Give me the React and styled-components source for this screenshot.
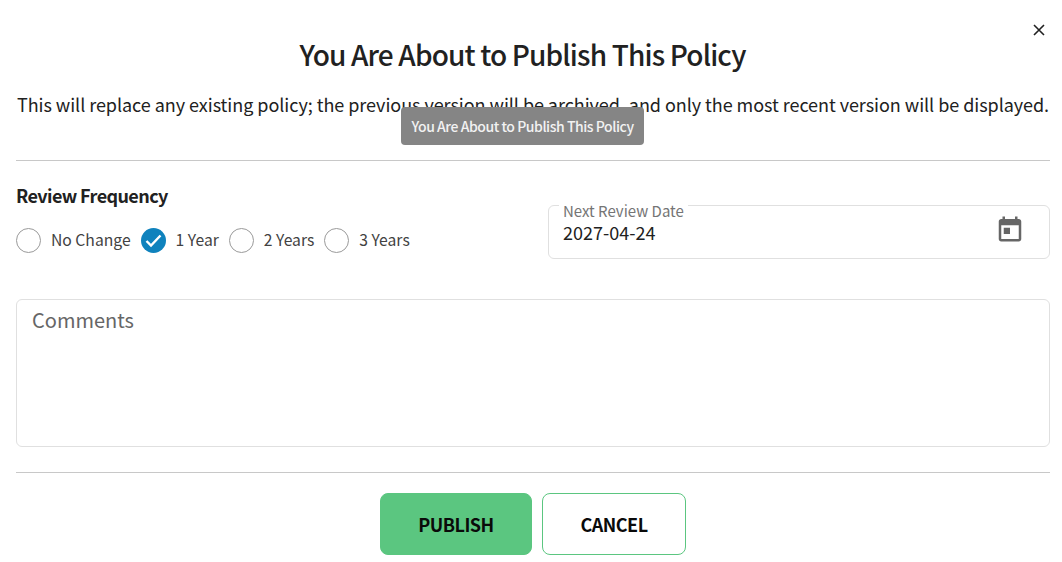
import React from "react";
import styled, { createGlobalStyle } from "styled-components";

const Global = createGlobalStyle`
  html, body { margin: 0; padding: 0; background: #fff; }
  body { font-family: "Noto Sans CJK SC", "Noto Sans", sans-serif; color: #212121; }
`;

const Dialog = styled.div`
  position: relative;
  width: 1062px;
  height: 562px;
  box-sizing: border-box;
  padding: 0 12px 0 16px;
  overflow: hidden;
`;

const CloseButton = styled.button`
  position: absolute;
  top: 22px;
  right: 15px;
  width: 16px;
  height: 16px;
  padding: 0;
  border: 0;
  background: none;
  display: flex;
  align-items: center;
  justify-content: center;
`;

const Title = styled.h2`
  margin: 0;
  padding: 33px 21px 0 0;
  height: 42px;
  line-height: 42px;
  font-size: 28px;
  font-weight: 500;
  letter-spacing: -0.85px;
  text-align: center;
  color: #212121;
`;

const Description = styled.p`
  margin: 14px 0 0;
  line-height: 30px;
  font-size: 18px;
  letter-spacing: -0.05px;
  text-align: center;
  white-space: nowrap;
  color: #212121;
`;

const Tooltip = styled.div`
  position: absolute;
  left: 401px;
  top: 107px;
  width: 243px;
  height: 38px;
  border-radius: 4px;
  background: #858585;
  color: #f2f2f2;
  font-size: 14px;
  font-weight: 500;
  letter-spacing: -0.45px;
  line-height: 38px;
  text-align: center;
  white-space: nowrap;
`;

const Divider = styled.hr`
  margin: ${(p) => p.$top}px 0 0;
  border: 0;
  height: 1px;
  background: #c8c8c8;
`;

const FormRow = styled.div`
  display: flex;
  justify-content: space-between;
  margin-top: 24px;
  height: 74px;
`;

const FrequencyColumn = styled.div`
  display: flex;
  flex-direction: column;
  margin-top: -2px;
`;

const SectionLabel = styled.div`
  font-size: 18px;
  font-weight: 700;
  letter-spacing: -0.6px;
  line-height: 24px;
  color: #212121;
`;

const Options = styled.div`
  display: flex;
  align-items: center;
  margin-top: 20px;
`;

const Option = styled.label`
  display: flex;
  align-items: center;
  margin-right: ${(p) => p.$gap}px;
  font-size: 15.7px;
  line-height: 26px;
  color: #424242;
`;

const RadioCircle = styled.span`
  width: 25px;
  height: 25px;
  box-sizing: border-box;
  border-radius: 50%;
  border: ${(p) => (p.$checked ? "0" : "1px solid #9a9a9a")};
  background: ${(p) => (p.$checked ? "#0f82bd" : "#fff")};
  margin-right: 10px;
  display: flex;
  align-items: center;
  justify-content: center;
`;

const DateField = styled.div`
  position: relative;
  width: 502px;
  height: 54px;
  box-sizing: border-box;
  margin-top: 20px;
  border: 1px solid #e0e0e0;
  border-radius: 6px;
  padding: 13px 24px 0 14px;
  display: flex;
  justify-content: space-between;
`;

const FloatingLabel = styled.span`
  position: absolute;
  left: 10px;
  top: -3px;
  padding: 0 4px;
  background: #fff;
  font-size: 15px;
  line-height: 16px;
  color: #757575;
`;

const DateValue = styled.span`
  font-size: 18px;
  line-height: 26px;
  color: #212121;
`;

const CommentsBox = styled.div`
  margin-top: 40px;
  height: 148px;
  box-sizing: border-box;
  border: 1px solid #e0e0e0;
  border-radius: 6px;
  padding: 6px 15px;
  font-size: 20px;
  line-height: 28px;
  color: #666;
`;

const Actions = styled.div`
  display: flex;
  justify-content: center;
  gap: 10px;
  margin-top: 20px;
`;

const ActionButton = styled.button`
  height: 62px;
  width: ${(p) => p.$width}px;
  box-sizing: border-box;
  border-radius: 8px;
  border: 1px solid #5bc680;
  background: ${(p) => (p.$primary ? "#5bc680" : "#fff")};
  color: #0a0a0a;
  font-family: inherit;
  font-size: 18px;
  font-weight: 700;
  letter-spacing: -0.5px;
  padding: 0;
`;

const options = [
  { label: "No Change", gap: 10 },
  { label: "1 Year", checked: true, gap: 10 },
  { label: "2 Years", gap: 10 },
  { label: "3 Years", gap: 0 },
];

export default function App() {
  return (
    <Dialog>
      <Global />
      <CloseButton aria-label="Close">
        <svg width="12" height="12" viewBox="0 0 12 12">
          <path d="M1 1L11 11M11 1L1 11" stroke="#212121" strokeWidth="1.6" fill="none" />
        </svg>
      </CloseButton>
      <Title>You Are About to Publish This Policy</Title>
      <Description>
        This will replace any existing policy; the previous version will be archived, and only the most recent version will be displayed.
      </Description>
      <Tooltip>You Are About to Publish This Policy</Tooltip>
      <Divider $top={41} />
      <FormRow>
        <FrequencyColumn>
          <SectionLabel>Review Frequency</SectionLabel>
          <Options>
            {options.map((o) => (
              <Option key={o.label} $gap={o.gap}>
                <RadioCircle $checked={o.checked}>
                  {o.checked && (
                    <svg width="19" height="15" viewBox="0 0 19 15">
                      <path d="M2.5 8L7 12.5L16.5 2.5" stroke="#fff" strokeWidth="2.4" fill="none" />
                    </svg>
                  )}
                </RadioCircle>
                {o.label}
              </Option>
            ))}
          </Options>
        </FrequencyColumn>
        <DateField>
          <FloatingLabel>Next Review Date</FloatingLabel>
          <DateValue>2027-04-24</DateValue>
          <svg width="30" height="30" viewBox="0 0 24 24" style={{ marginTop: -5 }}>
            <path fill="#666" d="M19 4h-1V2h-2v2H8V2H6v2H5c-1.1 0-2 .9-2 2v14c0 1.1.9 2 2 2h14c1.1 0 2-.9 2-2V6c0-1.1-.9-2-2-2zm0 16H5V9h14v11z" />
            <rect x="7" y="11" width="5" height="5" fill="#666" />
          </svg>
        </DateField>
      </FormRow>
      <CommentsBox>Comments</CommentsBox>
      <Divider $top={25} />
      <Actions>
        <ActionButton $primary $width={152}>PUBLISH</ActionButton>
        <ActionButton $width={144}>CANCEL</ActionButton>
      </Actions>
    </Dialog>
  );
}
